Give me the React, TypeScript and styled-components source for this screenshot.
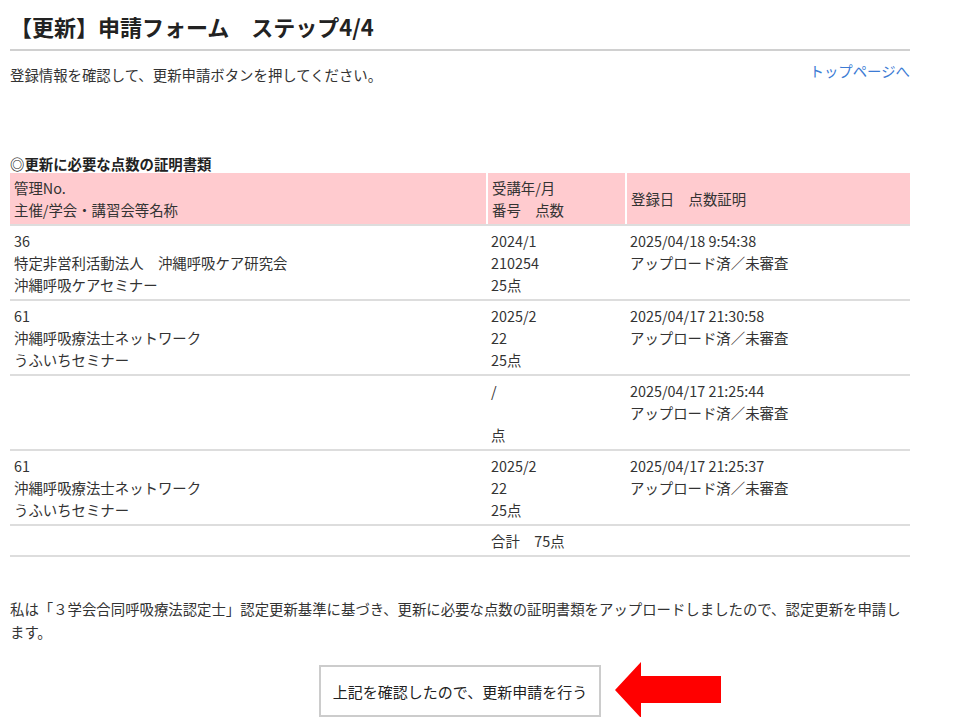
import React from "react";
import styled, { createGlobalStyle } from "styled-components";

const GlobalStyle = createGlobalStyle`
  html, body { margin: 0; padding: 0; background: #fff; }
  body {
    font-family: "Noto Sans CJK JP", "Noto Sans", sans-serif;
    color: #333;
    font-size: 14.4px;
  }
`;

const Page = styled.div`
  width: 900px;
  padding: 0 10px;
`;

const Title = styled.h1`
  margin: 0;
  padding: 11px 0 8px;
  font-size: 22px;
  line-height: 30px;
  font-weight: bold;
  color: #222;
  border-bottom: 2px solid #d0d0d0;
`;

const SubRow = styled.div`
  display: flex;
  justify-content: space-between;
  align-items: flex-start;
  margin-top: 13px;
  line-height: 22px;
`;

const Lead = styled.p`
  margin: 0;
  font-size: 14.4px;
`;

const TopLink = styled.a`
  margin-top: -4px;
  color: #3c7bd4;
  text-decoration: none;
  font-size: 14.4px;
`;

const SectionHeading = styled.h2`
  margin: 68px 0 0;
  font-size: 14.4px;
  line-height: 19px;
  font-weight: bold;
  color: #222;
`;

const Table = styled.table`
  width: 900px;
  border-collapse: collapse;
  table-layout: fixed;
`;

const Th = styled.th<{ $w: number }>`
  box-sizing: border-box;
  width: ${(p) => p.$w}px;
  background: #ffcbcf;
  text-align: left;
  font-weight: normal;
  line-height: 22px;
  padding: 4px 4px 3px;
  border-right: 2px solid #fff;
  border-bottom: 2px solid #ddd;
  vertical-align: middle;
  &:last-child { border-right: none; }
`;

const Td = styled.td`
  padding: 4px 4px 3px;
  line-height: 22px;
  vertical-align: top;
  border-bottom: 2px solid #ddd;
  white-space: nowrap;
`;

const Line = styled.div`
  height: 22px;
`;

const Notice = styled.p`
  margin: 40px 0 0;
  line-height: 23px;
  font-size: 14.4px;
`;

const ActionRow = styled.div`
  display: flex;
  justify-content: center;
  margin-top: 22px;
`;

const ButtonWrap = styled.div`
  position: relative;
`;

const SubmitButton = styled.button`
  width: 282px;
  height: 52px;
  background: #fff;
  border: 2px solid #ccc;
  font-family: "Noto Sans CJK JP", sans-serif;
  font-size: 15px;
  color: #222;
  cursor: pointer;
  padding: 0;
`;

const Arrow = styled.svg`
  position: absolute;
  left: 296px;
  top: -3px;
  width: 106px;
  height: 56px;
`;

type Row = { c1: string[]; c2: string[]; c3: string[] };

const rows: Row[] = [
  {
    c1: ["36", "特定非営利活動法人　沖縄呼吸ケア研究会", "沖縄呼吸ケアセミナー"],
    c2: ["2024/1", "210254", "25点"],
    c3: ["2025/04/18 9:54:38", "アップロード済／未審査"],
  },
  {
    c1: ["61", "沖縄呼吸療法士ネットワーク", "うふいちセミナー"],
    c2: ["2025/2", "22", "25点"],
    c3: ["2025/04/17 21:30:58", "アップロード済／未審査"],
  },
  {
    c1: ["", "", ""],
    c2: ["/", "", "点"],
    c3: ["2025/04/17 21:25:44", "アップロード済／未審査"],
  },
  {
    c1: ["61", "沖縄呼吸療法士ネットワーク", "うふいちセミナー"],
    c2: ["2025/2", "22", "25点"],
    c3: ["2025/04/17 21:25:37", "アップロード済／未審査"],
  },
];

const Cell = ({ lines }: { lines: string[] }) => (
  <Td>
    {lines.map((l, i) => (
      <Line key={i}>{l}</Line>
    ))}
  </Td>
);

export default function App() {
  return (
    <>
      <GlobalStyle />
      <Page>
        <Title>【更新】申請フォーム　ステップ4/4</Title>
        <SubRow>
          <Lead>登録情報を確認して、更新申請ボタンを押してください。</Lead>
          <TopLink href="#">トップページへ</TopLink>
        </SubRow>
        <SectionHeading>◎更新に必要な点数の証明書類</SectionHeading>
        <Table>
          <thead>
            <tr>
              <Th $w={477}>
                管理No.
                <br />
                主催/学会・講習会等名称
              </Th>
              <Th $w={139}>
                受講年/月
                <br />
                番号　点数
              </Th>
              <Th $w={284}>登録日　点数証明</Th>
            </tr>
          </thead>
          <tbody>
            {rows.map((r, i) => (
              <tr key={i}>
                <Cell lines={r.c1} />
                <Cell lines={r.c2} />
                <Cell lines={r.c3} />
              </tr>
            ))}
            <tr>
              <Td />
              <Td>合計　75点</Td>
              <Td />
            </tr>
          </tbody>
        </Table>
        <Notice>
          私は「３学会合同呼吸療法認定士」認定更新基準に基づき、更新に必要な点数の証明書類をアップロードしましたので、認定更新を申請します。
        </Notice>
        <ActionRow>
          <ButtonWrap>
            <SubmitButton type="button">上記を確認したので、更新申請を行う</SubmitButton>
            <Arrow viewBox="0 0 106 56" aria-hidden="true">
              <polygon points="0,28 26,0 26,14 106,14 106,41 26,41 26,56" fill="#ff0000" />
            </Arrow>
          </ButtonWrap>
        </ActionRow>
      </Page>
    </>
  );
}
